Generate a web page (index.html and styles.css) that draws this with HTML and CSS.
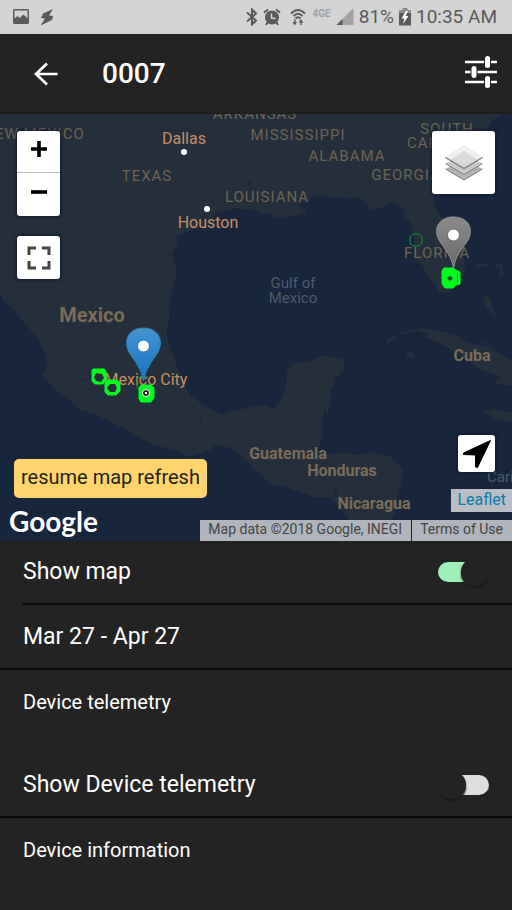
FILE: index.html
```html
<!DOCTYPE html>
<html lang="en">
<head>
<meta charset="utf-8">
<meta name="viewport" content="width=device-width, initial-scale=1">
<title>0007</title>
<link rel="stylesheet" href="styles.css">
</head>
<body>
<div class="status-bar">
  <div class="status-group">
    <svg width="18" height="18" viewBox="0 0 18 18" aria-hidden="true"><path fill="currentColor" fill-rule="evenodd" d="M2.500 1h13A1.500 1.500 0 0 1 17 2.500v12a1.500 1.500 0 0 1-1.500 1.500h-13A1.500 1.500 0 0 1 1 14.500v-12A1.500 1.500 0 0 1 2.500 1zM2.500 2.500v8L5.500 8l2 2 4-3.500 4 4v-8z"/></svg>
    <svg width="14" height="18" viewBox="0 0 14 18" aria-hidden="true"><path fill="currentColor" d="M13 1 3 5.500 1 10l4 .5-4.500 7L12 12l1-4-4-.5z"/></svg>
  </div>
  <div class="status-group status-right">
    <svg width="12" height="18" viewBox="0 0 12 18" aria-hidden="true"><path fill="none" stroke="currentColor" stroke-width="2" d="m1 4.500 9 8L6 16.500v-15l4 4-9 8"/></svg>
    <svg width="18" height="18" viewBox="0 0 18 18" aria-hidden="true"><circle cx="9" cy="9.500" r="7" fill="currentColor"/><path d="m1 4.500 4-3M17 4.500l-4-3M4.500 14.500 3 17M13.500 14.500 15 17" stroke="currentColor" stroke-width="2" fill="none"/><path d="M8.500 5.500V10l4 .5" stroke="#d4d4d4" stroke-width="1.500" fill="none"/></svg>
    <svg class="wifi" width="16" height="18" viewBox="0 0 16 18" aria-hidden="true"><path d="M1 5.500Q8-1.500 15 5.500M3.500 8Q8 3.500 12.500 8M5.500 10.500Q8 8 10.500 10.500" stroke="currentColor" stroke-width="2" fill="none"/><path d="M4.800 11.500v4M11 17v-4" stroke="currentColor" stroke-width="1.500"/><path fill="currentColor" d="M2.500 14h4.600l-2.300 3.500zM8.700 14.500h4.600L11 11z"/></svg>
    <span class="network">4GE</span>
    <svg width="18" height="18" viewBox="0 0 18 18" aria-hidden="true"><path fill="#a2a2a2" d="M17.500 0v17H.5z"/><path fill="currentColor" d="M6.500 11v6h-6z"/></svg>
    <span class="status-text">81%</span>
    <svg width="12" height="18" viewBox="0 0 12 18" aria-hidden="true"><path fill="#8f8f8f" d="M3.500 0h5v2H12v4H0V2h3.500z"/><path fill="currentColor" d="M0 5h12v12.500H0z"/><path fill="#fff" d="M7 3 2.500 10.500h3L4 16l5.500-8h-3L9 3z"/></svg>
    <span class="status-text">10:35 AM</span>
  </div>
</div>

<header class="app-bar">
  <button class="icon-button" aria-label="Back">
    <svg width="24" height="24" viewBox="0 0 24 24"><path d="M23.500 12H2M13 1.500 2 12l11 10.500" fill="none" stroke="currentColor" stroke-width="2.700"/></svg>
  </button>
  <h1>0007</h1>
  <button class="icon-button" aria-label="Options">
    <svg width="32" height="36" viewBox="0 0 32 36"><path d="M0 6h19M26 6h6M0 16h5.500M12.500 16H32M0 26h19M26 26h6" stroke="currentColor" stroke-width="2.600"/><path d="M22.500 2.500v7M9 12.500v7M22.500 22.500v7" stroke="currentColor" stroke-width="5" stroke-linecap="round"/></svg>
  </button>
</header>

<main>
<section class="map" aria-label="Map">
  <svg class="map-canvas" viewBox="0 0 512 427" preserveAspectRatio="xMidYMid slice">
    <defs>
      <linearGradient id="blue" x2="0" y2="1"><stop stop-color="#4595cf"/><stop offset="1" stop-color="#1670c5"/></linearGradient>
      <linearGradient id="gray" x2="0" y2="1"><stop stop-color="#8b8b8b"/><stop offset="1" stop-color="#696969"/></linearGradient>
      <path id="pin" d="M0 54C-2 42-8 35-14 26C-21 14-15 1 0 1S21 14 14 26C8 35 2 42 0 54z"/>
    </defs>
    <g transform="translate(0 -14) scale(.33333)">
      <g class="land">
        <path d="M0 30H1530L1500 48 1475 65 1462 90 1440 120 1400 170 1340 220 1300 275 1303 310 1318 345 1340 380 1375 430 1392 475 1395 515 1380 555 1345 575 1318 578 1310 560 1280 525 1270 500 1252 480 1240 450 1246 415 1235 385 1233 370 1215 350 1213 332 1190 308 1168 310 1145 325 1115 330 1095 305 1070 290 1040 296 1010 289 990 297 972 285 950 292 935 288 925 305 897 312 905 325 920 328 913 345 900 340 890 352 870 348 855 356 840 350 820 352 810 335 790 346 770 332 740 328 710 325 680 332 650 338 635 362 600 385 570 390 555 402 528 405 533 422 528 440 515 460 525 490 532 520 520 560 510 600 508 650 500 700 510 740 525 780 545 840 570 885 610 915 650 935 665 945 700 932 750 922 795 915 820 927 845 895 860 850 862 810 880 790 920 785 970 767 1030 775 1035 800 1022 822 1000 835 1005 850 990 880 995 895 983 945 973 925 965 970 968 1010 950 1060 1000 1062 1040 1057 1070 1065 1120 1056 1145 1066 1170 1066 1180 1085 1210 1105 1203 1150 1190 1200 1183 1240 1160 1290 1200 1330H1090L1045 1255 1010 1210 985 1190 950 1195 870 1165 820 1155 780 1125 730 1075 695 1045 650 1035 620 1055 570 1070 520 1050 450 1030 390 995 330 965 290 945 240 930 205 895 165 870 140 840 123 825 143 800 138 770 115 720 75 670 40 630 10 605 0 575z"/>
        <path d="m1132 752 25-11 5-25 45-20 60-12 65 12 40 10 30 20 65 15 69 40v75l-54-5 20-20-60-22-70-50-55-30-45-18 20-10-40-9-60 13-35 30-20 22zM1220 750l22 10-3 14-18-4zM1450 935l28-8 58 10v28l-40-5zM1460 580l13 25 15 47-30-32-12-17zM1425 497l35-7 10 8-35 5zM1480 488l24 5 8 32-16 10 5-28zM1425 715l45 20 25 22-45-27zM1337 822l16 4-13 4z"/>
      </g>
      <path class="water-detail" d="m375 390 8 8 15 24-12-12zM260 540h24l-20 5zM665 236l12 4 4 8-14-4zM696 236l12 11-10-2zM577 181l12 2-5 5zM735 245l12-5 12 15-16-2zM560 935l17 16-8 3zM599 947l8 15-5 12zM697 995l15 2-10 5zM438 524l7-2 3 6zM240 836l26 1v2h-25zM1000 1165l17 15-18 20z"/>
    </g>
    <g class="state">
      <text x="255" y="5">ARKANSAS</text><text x="34" y="25">NEW MEXICO</text>
      <text x="298" y="26">MISSISSIPPI</text><text x="347" y="47">ALABAMA</text>
      <text x="147" y="67">TEXAS</text><text x="267" y="88">LOUISIANA</text>
      <text x="406" y="66">GEORGIA</text><text x="447" y="20">SOUTH</text>
      <text x="447" y="34">CAROLINA</text><text x="437" y="144">FLORIDA</text>
    </g>
    <g class="sea"><text x="293" y="174">Gulf of</text><text x="293" y="189">Mexico</text><text x="521" y="368">Caribbean</text></g>
    <g class="country"><text class="large" x="92" y="208">Mexico</text><text x="472" y="247">Cuba</text><text x="288" y="345">Guatemala</text><text x="342" y="362">Honduras</text><text x="374" y="395">Nicaragua</text></g>
    <g class="city"><text x="184" y="30">Dallas</text><text x="208" y="114">Houston</text><text x="146" y="271">Mexico City</text></g>
    <g fill="#fff"><circle cx="184" cy="38" r="3"/><circle cx="207" cy="95" r="3"/></g>
    <path class="trace-thin" d="m413 120-3 3v6l3 3h6l3-3v-6l-3-3zM141 262l-4 3v8l4 4M140 263h8"/>
    <use href="#pin" fill="url(#gray)" stroke="#929292" transform="translate(453.500 102) scale(1 .96)"/>
    <circle cx="453.500" cy="121" r="6" fill="#fff" stroke="#696969"/>
    <use href="#pin" fill="url(#blue)" stroke="#377fb5" transform="translate(143.500 213)"/>
    <circle cx="143.500" cy="232" r="6" fill="#fff" stroke="#2b73ab"/>
    <path class="trace" d="M93 255h11l2 2v9l-3 4h-8l-3-3v-11zM107 266h10l3 3v8l-4 4h-8l-3-3v-10zM141 271h10l3 3v10l-3 4h-10l-2-3v-11zM444 154h9l3 2 4 2v12l-4 1-3 3h-8l-3-4v-13z"/>
    <path class="land" d="m96 259-2 4 2 4 5 1 3-4-2-4zM110 270l-3 4 3 4h5l2-4-2-4z"/>
    <circle cx="146" cy="279" r="3.500" fill="#111" stroke="#fff"/><circle cx="146" cy="279" r="1.200" fill="#fff"/>
    <path d="m447 164 3-2 3 2-3 3z" fill="#174332"/><path d="M457.500 159v9" stroke="#16653a"/>
  </svg>

  <div class="controls controls-left">
    <div class="zoom">
      <button aria-label="Zoom in"><svg width="16" height="16" viewBox="0 0 16 16"><path d="M8 0v16M0 8h16" stroke="currentColor" stroke-width="3.600"/></svg></button>
      <button aria-label="Zoom out"><svg width="16" height="16" viewBox="0 0 16 16"><path d="M0 8h16" stroke="currentColor" stroke-width="3.600"/></svg></button>
    </div>
    <button class="map-button fullscreen" aria-label="Full screen"><svg width="24" height="24" viewBox="0 0 24 24"><path d="M2 9V2h7M15 2h7v7M22 15v7h-7M9 22H2v-7" fill="none" stroke="#444" stroke-width="3"/></svg></button>
  </div>
  <button class="map-button layers" aria-label="Layers"><svg width="38" height="36" viewBox="0 0 38 36"><path fill="#b4b4b4" d="m.5 24 18.500-10 18.500 10L19 35z"/><path d="M.5 24 19 35l18.500-11" fill="none" stroke="#7c7c7c"/><path fill="#cacaca" d="m.5 18.500 18.500-10 18.500 10L19 29.500z"/><path d="M.5 18.500 19 29.500l18.500-11" fill="none" stroke="#7c7c7c"/><path fill="#f0f0f0" stroke="#ddd" stroke-width=".5" d="m.5 12.500 18.500-12 18.500 12L19 23.500z"/><path fill="#dadada" d="m5 15 14-9 14 9-14 8.500z"/><path d="M.5 12.500 19 23.500l18.500-11" fill="none" stroke="#777" stroke-width="1.200"/></svg></button>
  <button class="map-button locate" aria-label="Locate"><svg width="30" height="30" viewBox="0 0 30 30"><path fill="currentColor" stroke="currentColor" stroke-linejoin="round" d="M28.500 1.500 15.500 28.500l-2-.5V16L1.500 15.500V14z"/></svg></button>
  <button class="refresh">resume map refresh</button>
  <span class="google">Google</span>
  <a class="credit leaflet" href="#leaflet">Leaflet</a>
  <div class="credits"><span class="credit">Map data ©2018 Google, INEGI</span><a class="credit" href="#terms">Terms of Use</a></div>
</section>

<section>
  <div class="row row-inset"><label for="show-map">Show map</label><input class="toggle" id="show-map" type="checkbox" role="switch" checked></div>
  <button class="row">Mar 27 - Apr 27</button>
</section>
<section>
  <h2>Device telemetry</h2>
  <div class="row telemetry"><label for="show-telemetry">Show Device telemetry</label><input class="toggle" id="show-telemetry" type="checkbox" role="switch"></div>
</section>
<section>
  <h2>Device information</h2>
</section>
</main>
</body>
</html>
```
FILE: styles.css
```css
* { box-sizing: border-box; }

body {
  margin: 0;
  background: #232323;
  color: #fff;
  font-family: Roboto, "Liberation Sans", sans-serif;
}

button {
  padding: 0;
  border: 0;
  color: inherit;
  background: none;
  font: inherit;
}

svg { display: block; flex: none; }

.status-bar {
  display: flex;
  justify-content: space-between;
  align-items: center;
  height: 34px;
  padding: 0 15px 0 12px;
  background: #d4d4d4;
  color: #5a5a5a;
}

.status-group { display: flex; align-items: center; gap: 10px; }
.status-right { gap: 5px; }
.wifi { margin: 0 2px 0 4px; }
.status-text { font-size: 19px; line-height: 34px; white-space: nowrap; }
.network { color: #a2a2a2; font-size: 10px; font-weight: 700; align-self: flex-start; line-height: 28px; }

.app-bar {
  display: flex;
  align-items: center;
  height: 80px;
  padding: 0 15px 0 34px;
}

.app-bar h1 {
  flex: 1;
  margin: 0 0 0 44px;
  font-size: 28px;
  line-height: 36px;
  font-weight: 500;
}

.map {
  position: relative;
  aspect-ratio: 512 / 427;
  overflow: hidden;
  background: #17263d;
  box-shadow: 0 -1px 3px #1b1b1b;
}

.map-canvas { width: 100%; height: 100%; }
.map-canvas text { text-anchor: middle; paint-order: stroke; stroke: #242f3b; stroke-width: 1px; }
.land { fill: #242f3b; }
.water-detail { fill: #1a293e; }
.state { fill: #6c6354; font-size: 15px; letter-spacing: 1px; }
.map-canvas .sea text { fill: #50596a; font-size: 15px; stroke: none; }
.country { fill: #7b6b57; font-size: 16px; font-weight: 700; }
.country .large { font-size: 20px; }
.city { fill: #c88d65; font-size: 16px; }
.trace { fill: #00fc20; stroke: #00fc20; }
.trace-thin { fill: none; stroke: #0a9b35; }

.controls { position: absolute; top: 17px; left: 17px; display: grid; gap: 20px; }

.zoom, .map-button {
  border-radius: 3px;
  background: #fff;
  color: #000;
  box-shadow: 0 0 3px 1px #101a2b;
}

.zoom button, .map-button { display: grid; place-items: center; }
.zoom button { width: 43px; height: 43px; padding-bottom: 6px; }
.zoom button:first-child { height: 42px; border-bottom: 1px solid #bbb; }
.fullscreen { width: 43px; height: 43px; }
.layers { position: absolute; top: 17px; right: 17px; width: 63px; height: 63px; }
.locate { position: absolute; bottom: 69px; right: 17px; width: 37px; height: 37px; }

.refresh {
  position: absolute;
  left: 14px;
  bottom: 43px;
  height: 39px;
  padding: 0 7px 3px;
  border-radius: 5px;
  background: #ffd46c;
  color: #232323;
  font-size: 20px;
}

.google {
  position: absolute;
  left: 9px;
  bottom: 2px;
  font: 700 28px/36px Lato, sans-serif;
}

.credits { position: absolute; right: 0; bottom: 0; display: flex; gap: 1px; }

.credit {
  height: 21px;
  padding: 0 9px 0 8px;
  background: #afb4bd;
  color: #444;
  font-size: 14px;
  line-height: 18px;
  text-decoration: none;
}

.leaflet {
  position: absolute;
  right: 0;
  bottom: 29px;
  height: 23px;
  padding: 0 6px;
  background: #b9bec6;
  color: #0b7cac;
  font-size: 16px;
  line-height: 22px;
}

.row {
  display: flex;
  justify-content: space-between;
  align-items: center;
  width: 100%;
  min-height: 65px;
  padding: 0 23px;
  border-bottom: 2px solid #080808;
  font-size: 23px;
  line-height: 32px;
  text-align: left;
}

.row-inset {
  width: auto;
  min-height: 64px;
  margin-left: 23px;
  padding-left: 0;
}

h2 {
  margin: 0;
  padding: 16px 23px;
  font-size: 20px;
  line-height: 32px;
  font-weight: 400;
}

.telemetry { margin-top: 19px; }

.toggle {
  appearance: none;
  position: relative;
  width: 51px;
  height: 20px;
  margin: 0;
  border-radius: 10px;
  background: #dedede;
}

.toggle::before {
  content: "";
  position: absolute;
  top: -4px;
  left: 0;
  width: 28px;
  height: 28px;
  border-radius: 50%;
  background: #232323;
  box-shadow: 0 2px 2px #1a1a1a;
}

.toggle:checked { background: #a1efb8; }
.toggle:checked::before { left: 23px; }
```
